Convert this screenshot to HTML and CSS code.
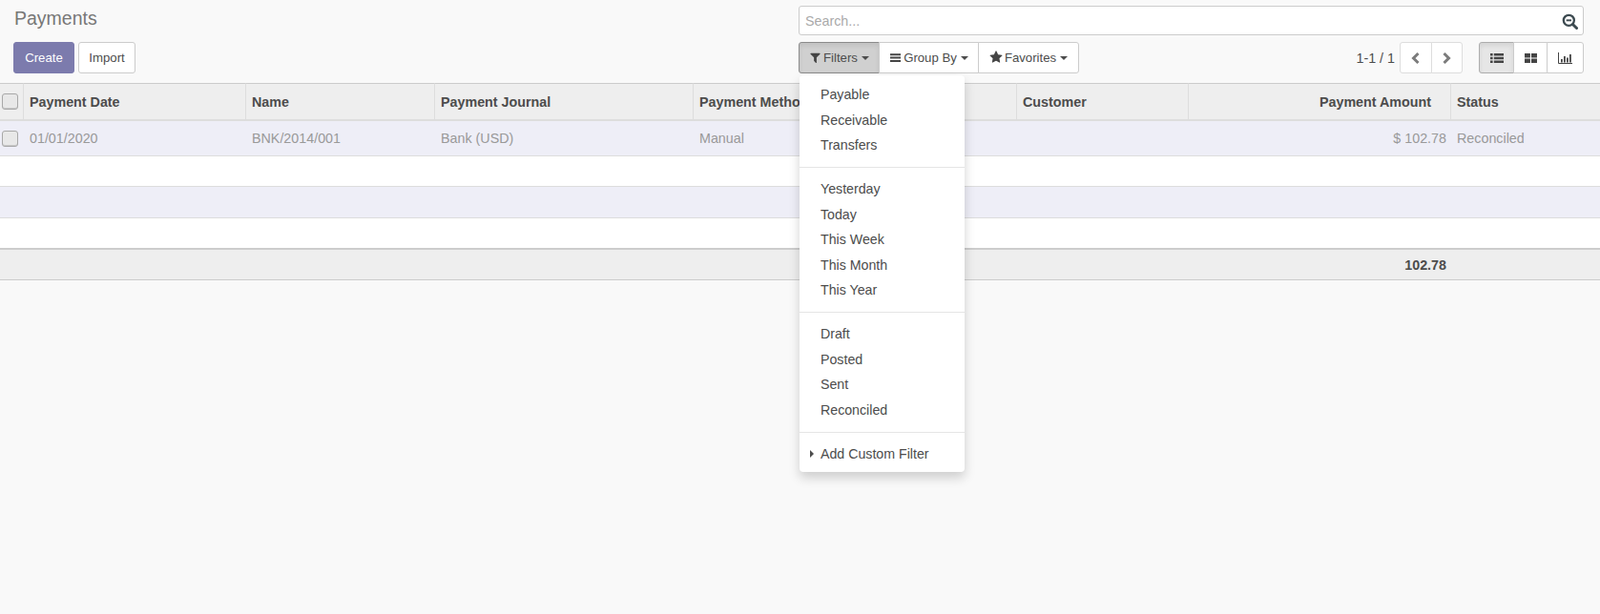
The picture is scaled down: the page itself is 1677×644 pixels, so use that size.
FILE: index.html
```html
<!DOCTYPE html>
<html lang="en">
<head>
    <meta charset="UTF-8">
    <meta name="viewport" content="width=device-width, initial-scale=1.0">
    <title>Payments</title>
    <link rel="stylesheet" href="styles.css">
</head>
<body>
    <div class="control-panel">
        <div class="panel-left">
            <h1 class="title">Payments</h1>
            <div class="actions">
                <button class="btn btn-primary">Create</button>
                <button class="btn">Import</button>
            </div>
        </div>
        <div class="panel-right">
            <div class="search-box">
                <span class="search-placeholder">Search...</span>
                <svg class="search-icon" viewBox="0 0 16 16" width="17" height="17">
                    <circle cx="6.9" cy="6.9" r="5.2" fill="none" stroke="#3c4a50" stroke-width="2.2"/>
                    <path d="M4.4 6.9h5" stroke="#3c4a50" stroke-width="1.8"/>
                    <path d="M10.8 10.8l3.8 3.8" stroke="#3c4a50" stroke-width="2.8" stroke-linecap="round"/>
                </svg>
            </div>
            <div class="tools">
                <div class="btn-group">
                    <button class="btn btn-filters active">
                        <svg class="fa" viewBox="0 0 1792 1792" width="13" height="13"><path d="M1595 295q17 41-14 70l-493 493v742q0 42-39 59-13 5-25 5-27 0-45-19l-256-256q-19-19-19-45v-486l-493-493q-31-29-14-70 17-39 59-39h1280q42 0 59 39z"/></svg>
                        Filters <span class="caret"></span>
                    </button>
                    <button class="btn btn-groupby">
                        <svg class="fa" viewBox="0 0 13 13" width="13" height="13"><path d="M1 2.2h11v2H1zM1 5.6h11v2H1zM1 9h11v2H1z"/></svg>
                        Group By <span class="caret"></span>
                    </button>
                    <button class="btn btn-favorites">
                        <svg class="fa" viewBox="0 0 1792 1792" width="14" height="14"><path d="M1728 647q0 22-26 48l-363 354 86 500q1 7 1 20 0 21-10.5 35.5t-30.5 14.5q-19 0-40-12l-449-236-449 236q-22 12-40 12-21 0-31.5-14.5t-10.5-35.5q0-6 2-20l86-500-364-354q-25-27-25-48 0-37 56-46l502-73 225-455q19-41 49-41t49 41l225 455 502 73q56 9 56 46z"/></svg>
                        Favorites <span class="caret"></span>
                    </button>
                </div>
                <div class="pager">
                    <span class="pager-value">1-1 / 1</span>
                    <div class="btn-group">
                        <button class="btn btn-page">
                            <svg viewBox="0 0 12 14" width="12" height="14"><path d="M8.5 2L3.5 7l5 5" fill="none" stroke="#7c7c7c" stroke-width="3"/></svg>
                        </button>
                        <button class="btn btn-page">
                            <svg viewBox="0 0 12 14" width="12" height="14"><path d="M3.5 2l5 5-5 5" fill="none" stroke="#7c7c7c" stroke-width="3"/></svg>
                        </button>
                    </div>
                </div>
                <div class="btn-group views">
                    <button class="btn btn-view view-list active">
                        <svg viewBox="0 0 14 12" width="14" height="12"><path d="M0 1h2.6v2.4H0zM0 4.8h2.6v2.4H0zM0 8.6h2.6V11H0zM3.8 1H14v2.4H3.8zM3.8 4.8H14v2.4H3.8zM3.8 8.6H14V11H3.8z" fill="#444"/></svg>
                    </button>
                    <button class="btn btn-view view-kanban">
                        <svg viewBox="0 0 13 12" width="13" height="12"><path d="M0 1h5.9v4.6H0zM7 1h6v4.6H7zM0 6.5h5.9V11H0zM7 6.5h6V11H7z" fill="#444"/></svg>
                    </button>
                    <button class="btn btn-view view-graph">
                        <svg viewBox="0 0 15 12" width="15" height="12"><path d="M.5 0v11.5H15" fill="none" stroke="#444"/><path d="M3 7h1.8v3.5H3zM6 4h1.8v6.5H6zM9 5.5h1.8v5H9zM12 2h1.8v8.5H12z" fill="#444"/></svg>
                    </button>
                </div>
            </div>
        </div>
    </div>

    <table class="list">
        <colgroup>
            <col class="col-check">
            <col class="col-date">
            <col class="col-name">
            <col class="col-journal">
            <col class="col-method">
            <col class="col-customer">
            <col class="col-amount">
            <col>
        </colgroup>
        <thead>
            <tr>
                <th class="cell-check"><span class="checkbox"></span></th>
                <th>Payment Date</th>
                <th>Name</th>
                <th>Payment Journal</th>
                <th>Payment Method</th>
                <th>Customer</th>
                <th class="amount">Payment Amount</th>
                <th>Status</th>
            </tr>
        </thead>
        <tbody>
            <tr class="row-first">
                <td class="cell-check"><span class="checkbox"></span></td>
                <td>01/01/2020</td>
                <td>BNK/2014/001</td>
                <td>Bank (USD)</td>
                <td>Manual</td>
                <td></td>
                <td class="amount">$ 102.78</td>
                <td>Reconciled</td>
            </tr>
            <tr class="row-even"><td colspan="8"></td></tr>
            <tr class="row-odd"><td colspan="8"></td></tr>
            <tr class="row-last"><td colspan="8"></td></tr>
        </tbody>
        <tfoot>
            <tr>
                <td colspan="6"></td>
                <td class="amount">102.78</td>
                <td></td>
            </tr>
        </tfoot>
    </table>

    <div class="filter-menu">
        <ul class="menu-group">
            <li>Payable</li>
            <li>Receivable</li>
            <li>Transfers</li>
        </ul>
        <ul class="menu-group">
            <li>Yesterday</li>
            <li>Today</li>
            <li>This Week</li>
            <li>This Month</li>
            <li>This Year</li>
        </ul>
        <ul class="menu-group">
            <li>Draft</li>
            <li>Posted</li>
            <li>Sent</li>
            <li>Reconciled</li>
        </ul>
        <ul class="menu-group">
            <li class="custom-filter">Add Custom Filter</li>
        </ul>
    </div>
</body>
</html>
```

FILE: styles.css
```css
body {
    font-family: "Liberation Sans", Arial, sans-serif;
    font-size: 14.3px;
    color: #4c4c4c;
    background-color: #f9f9f9;
    margin: 0;
    height: 644px;
    overflow: hidden;
    position: relative;
}

.control-panel {
    display: grid;
    grid-template-columns: 837px 1fr;
    height: 87px;
    padding-right: 17px;
    box-sizing: border-box;
}

.panel-left {
    padding-left: 14px;
}

.title {
    margin: 0;
    padding: 6px 0 0 1px;
    height: 44px;
    box-sizing: border-box;
    font-size: 19.5px;
    font-weight: normal;
    line-height: 26px;
    color: #777777;
}

.actions {
    display: flex;
    gap: 4px;
}

.btn {
    height: 33px;
    padding: 0 10px;
    font-family: inherit;
    font-size: 13.2px;
    color: #4c4c4c;
    background: #ffffff;
    border: 1px solid #cccccc;
    border-radius: 3px;
    box-sizing: border-box;
    white-space: nowrap;
}

.btn-primary {
    width: 64px;
    color: #ffffff;
    background: #7c7bad;
    border-color: #7c7bad;
}

.actions .btn:last-child {
    width: 60px;
}

.panel-right {
    padding-top: 6px;
}

.search-box {
    display: flex;
    justify-content: space-between;
    align-items: center;
    height: 31px;
    padding: 0 5px 0 6px;
    margin-bottom: 7px;
    background: #ffffff;
    border: 1px solid #cccccc;
    border-radius: 3px;
    box-sizing: border-box;
    font-size: 14.3px;
    color: #aaaaaa;
}

.search-icon {
    margin-top: 1px;
}

.tools {
    display: flex;
    align-items: center;
}

.btn-group {
    display: flex;
}

.btn-group .btn {
    border-radius: 0;
    margin-left: -1px;
}

.btn-group .btn:first-child {
    border-radius: 3px 0 0 3px;
    margin-left: 0;
}

.btn-group .btn:last-child {
    border-radius: 0 3px 3px 0;
}

.btn.active {
    background: #e6e6e6;
    border-color: #adadad;
    box-shadow: inset 0 3px 5px rgba(0, 0, 0, 0.08);
}

.btn-filters {
    width: 85px;
    padding: 0;
}

.btn.btn-filters.active {
    background: #d0d0d0;
    border-color: #8c8c8c;
}

.btn-groupby {
    width: 105px;
    padding: 0;
}

.btn-favorites {
    width: 106px;
    padding: 0;
}

.fa {
    fill: #444444;
    vertical-align: -2px;
    margin-right: -2px;
}

.caret {
    display: inline-block;
    width: 0;
    height: 0;
    vertical-align: 2px;
    border-top: 4px solid #4c4c4c;
    border-left: 4px solid transparent;
    border-right: 4px solid transparent;
}

.pager {
    display: flex;
    align-items: center;
    margin-left: auto;
}

.pager-value {
    font-size: 14.3px;
    margin-right: 5px;
}

.btn-page {
    width: 33.5px;
    padding: 0;
    border-color: #dddddd;
}

.btn-page svg,
.btn-view svg {
    display: block;
    margin: 0 auto;
}

.views {
    margin-left: 17px;
}

.btn-view {
    padding: 0;
}

.view-list {
    width: 37px;
}

.view-kanban {
    width: 36px;
}

.view-graph {
    width: 39px;
}

.list {
    width: 100%;
    table-layout: fixed;
    border-collapse: separate;
    border-spacing: 0;
}

.col-check { width: 25px; }
.col-date { width: 233px; }
.col-name { width: 198px; }
.col-journal { width: 271px; }
.col-method { width: 339px; }
.col-customer { width: 180px; }
.col-amount { width: 275px; }

th,
td {
    padding: 0 6px;
    text-align: left;
    white-space: nowrap;
    overflow: hidden;
}

th {
    box-sizing: border-box;
    height: 40px;
    background: #eeeeee;
    border-top: 1px solid #cccccc;
    border-right: 1px solid #dddddd;
    border-bottom: 2px solid #dddddd;
}

th:last-child {
    border-right: 0;
}

th.amount {
    text-align: right;
    padding-right: 20px;
}

td.amount {
    text-align: right;
    padding-right: 5px;
}

tbody td {
    color: #999999;
    border-bottom: 1px solid #dddddd;
    box-sizing: border-box;
}

.row-first td {
    height: 37px;
    background: #eeeef7;
}

.row-even td {
    height: 32px;
    background: #ffffff;
}

.row-odd td {
    height: 33px;
    background: #eeeef7;
}

.row-last td {
    height: 31px;
    background: #ffffff;
    border-bottom: 0;
}

tfoot td {
    height: 34px;
    box-sizing: border-box;
    font-weight: bold;
    background: #eeeeee;
    border-top: 2px solid #cccccc;
    border-bottom: 1px solid #cccccc;
}

th.cell-check,
td.cell-check {
    padding: 0 0 0 2px;
}

.checkbox {
    display: block;
    width: 15px;
    height: 15px;
    background: #e8e8e8;
    border: 1px solid #a8a8a8;
    border-radius: 3px;
    box-shadow: inset 0 -1px 0 #c8c8c8;
}

.filter-menu {
    position: absolute;
    left: 838px;
    top: 79px;
    width: 173px;
    padding: 7px 0 6px;
    box-sizing: border-box;
    background: #ffffff;
    border-radius: 4px;
    box-shadow: 0 6px 12px rgba(0, 0, 0, 0.175);
    font-size: 14.2px;
}

.menu-group {
    list-style: none;
    margin: 0 0 9px;
    padding: 0 0 9px;
    border-bottom: 1px solid #e5e5e5;
}

.menu-group:last-child {
    padding-bottom: 0;
    margin-bottom: 0;
    border-bottom: 0;
}

.menu-group li {
    height: 26.65px;
    line-height: 26.65px;
    padding-left: 22px;
    white-space: nowrap;
}

.custom-filter {
    position: relative;
}

.custom-filter::before {
    content: "";
    position: absolute;
    left: 11px;
    top: 9px;
    border-left: 4px solid #4c4c4c;
    border-top: 4px solid transparent;
    border-bottom: 4px solid transparent;
}
```
